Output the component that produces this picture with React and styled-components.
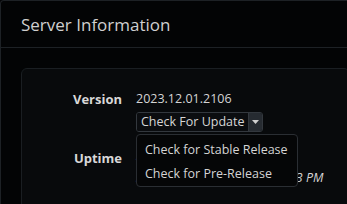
import React, { useState } from "react";
import styled, { createGlobalStyle } from "styled-components";

const GlobalStyle = createGlobalStyle`
  html, body {
    margin: 0;
    padding: 0;
    background: #030405;
    overflow: hidden;
  }
  body {
    font-family: "Open Sans", "Noto Sans", sans-serif;
    color: #d4d4d4;
  }
`;

const Card = styled.div`
  width: calc(100% + 4px);
  height: 204px;
  border: 1px solid #1d2125;
  border-bottom: 0;
  border-radius: 4px 4px 0 0;
  background: #030405;
  box-sizing: border-box;
  overflow: hidden;
`;

const CardHeader = styled.div`
  height: 46px;
  display: flex;
  align-items: center;
  padding-left: 20px;
  border-bottom: 1px solid #1d2125;
`;

const Title = styled.h2`
  margin: 0;
  font-size: 17px;
  font-weight: 400;
  color: #cfcfcf;
`;

const CardBody = styled.div`
  padding: 20px 0 0 20px;
`;

const Panel = styled.div`
  background: #080a0c;
  border: 1px solid #1a1e22;
  border-radius: 6px;
  padding: 21px 20px 40px 20px;
  min-height: 160px;
  box-sizing: border-box;
`;

const InfoGrid = styled.div`
  display: grid;
  grid-template-columns: 80px auto;
  column-gap: 14px;
  row-gap: 17px;
  align-items: start;
`;

const Label = styled.div`
  text-align: right;
  font-weight: 700;
  font-size: 13px;
  line-height: 18px;
  color: #d8d8d8;
`;

const Value = styled.div`
  font-size: 12.5px;
  line-height: 18px;
  color: #d4d4d4;
  font-style: ${(p) => (p.italic ? "italic" : "normal")};
  white-space: nowrap;
`;

const ValueStack = styled.div`
  display: flex;
  flex-direction: column;
  align-items: flex-start;
  gap: ${(p) => p.gap || 0}px;
`;

const DropdownWrap = styled.div`
  position: relative;
  display: inline-flex;
  margin-top: 4px;
`;

const SplitButton = styled.div`
  display: inline-flex;
  height: 20px;
  border: 1px solid #33383e;
  border-radius: 3px;
  overflow: hidden;
  box-sizing: border-box;
`;

const MainPart = styled.button`
  border: 0;
  background: #0b0d10;
  color: #d6d6d6;
  font-family: inherit;
  font-size: 12.5px;
  line-height: 18px;
  padding: 0 3px 0 4px;
  cursor: pointer;
`;

const CaretPart = styled.button`
  border: 0;
  border-left: 1px solid #33383e;
  background: #262b31;
  width: 14px;
  padding: 0;
  display: flex;
  align-items: center;
  justify-content: center;
  cursor: pointer;
`;

const Menu = styled.div`
  position: absolute;
  top: 22px;
  left: 0;
  width: 162px;
  background: #050607;
  border: 1px solid #2a2e33;
  border-radius: 4px;
  padding: 3px 0 0;
  box-sizing: border-box;
  z-index: 5;
`;

const MenuItem = styled.div`
  font-size: 12.5px;
  line-height: 24px;
  padding: 0 8px;
  color: #d4d4d4;
  white-space: nowrap;
  cursor: pointer;
`;

function App() {
  const [open, setOpen] = useState(true);

  return (
    <>
      <GlobalStyle />
      <Card>
        <CardHeader>
          <Title>Server Information</Title>
        </CardHeader>
        <CardBody>
          <Panel>
            <InfoGrid>
              <Label>Version</Label>
              <ValueStack>
                <Value>2023.12.01.2106</Value>
                <DropdownWrap>
                  <SplitButton>
                    <MainPart>Check For Update</MainPart>
                    <CaretPart onClick={() => setOpen(!open)}>
                      <svg width="7" height="4" viewBox="0 0 7 4">
                        <path d="M0 0h7L3.5 4z" fill="#d0d0d0" />
                      </svg>
                    </CaretPart>
                  </SplitButton>
                  {open && (
                    <Menu>
                      <MenuItem>Check for Stable Release</MenuItem>
                      <MenuItem>Check for Pre-Release</MenuItem>
                    </Menu>
                  )}
                </DropdownWrap>
              </ValueStack>
              <Label>Uptime</Label>
              <ValueStack gap={2}>
                <Value>4 days, 0 hours</Value>
                <Value italic>Since Friday, Dec. 1, 2023 9:13 PM</Value>
              </ValueStack>
            </InfoGrid>
          </Panel>
        </CardBody>
      </Card>
    </>
  );
}

export default App;
